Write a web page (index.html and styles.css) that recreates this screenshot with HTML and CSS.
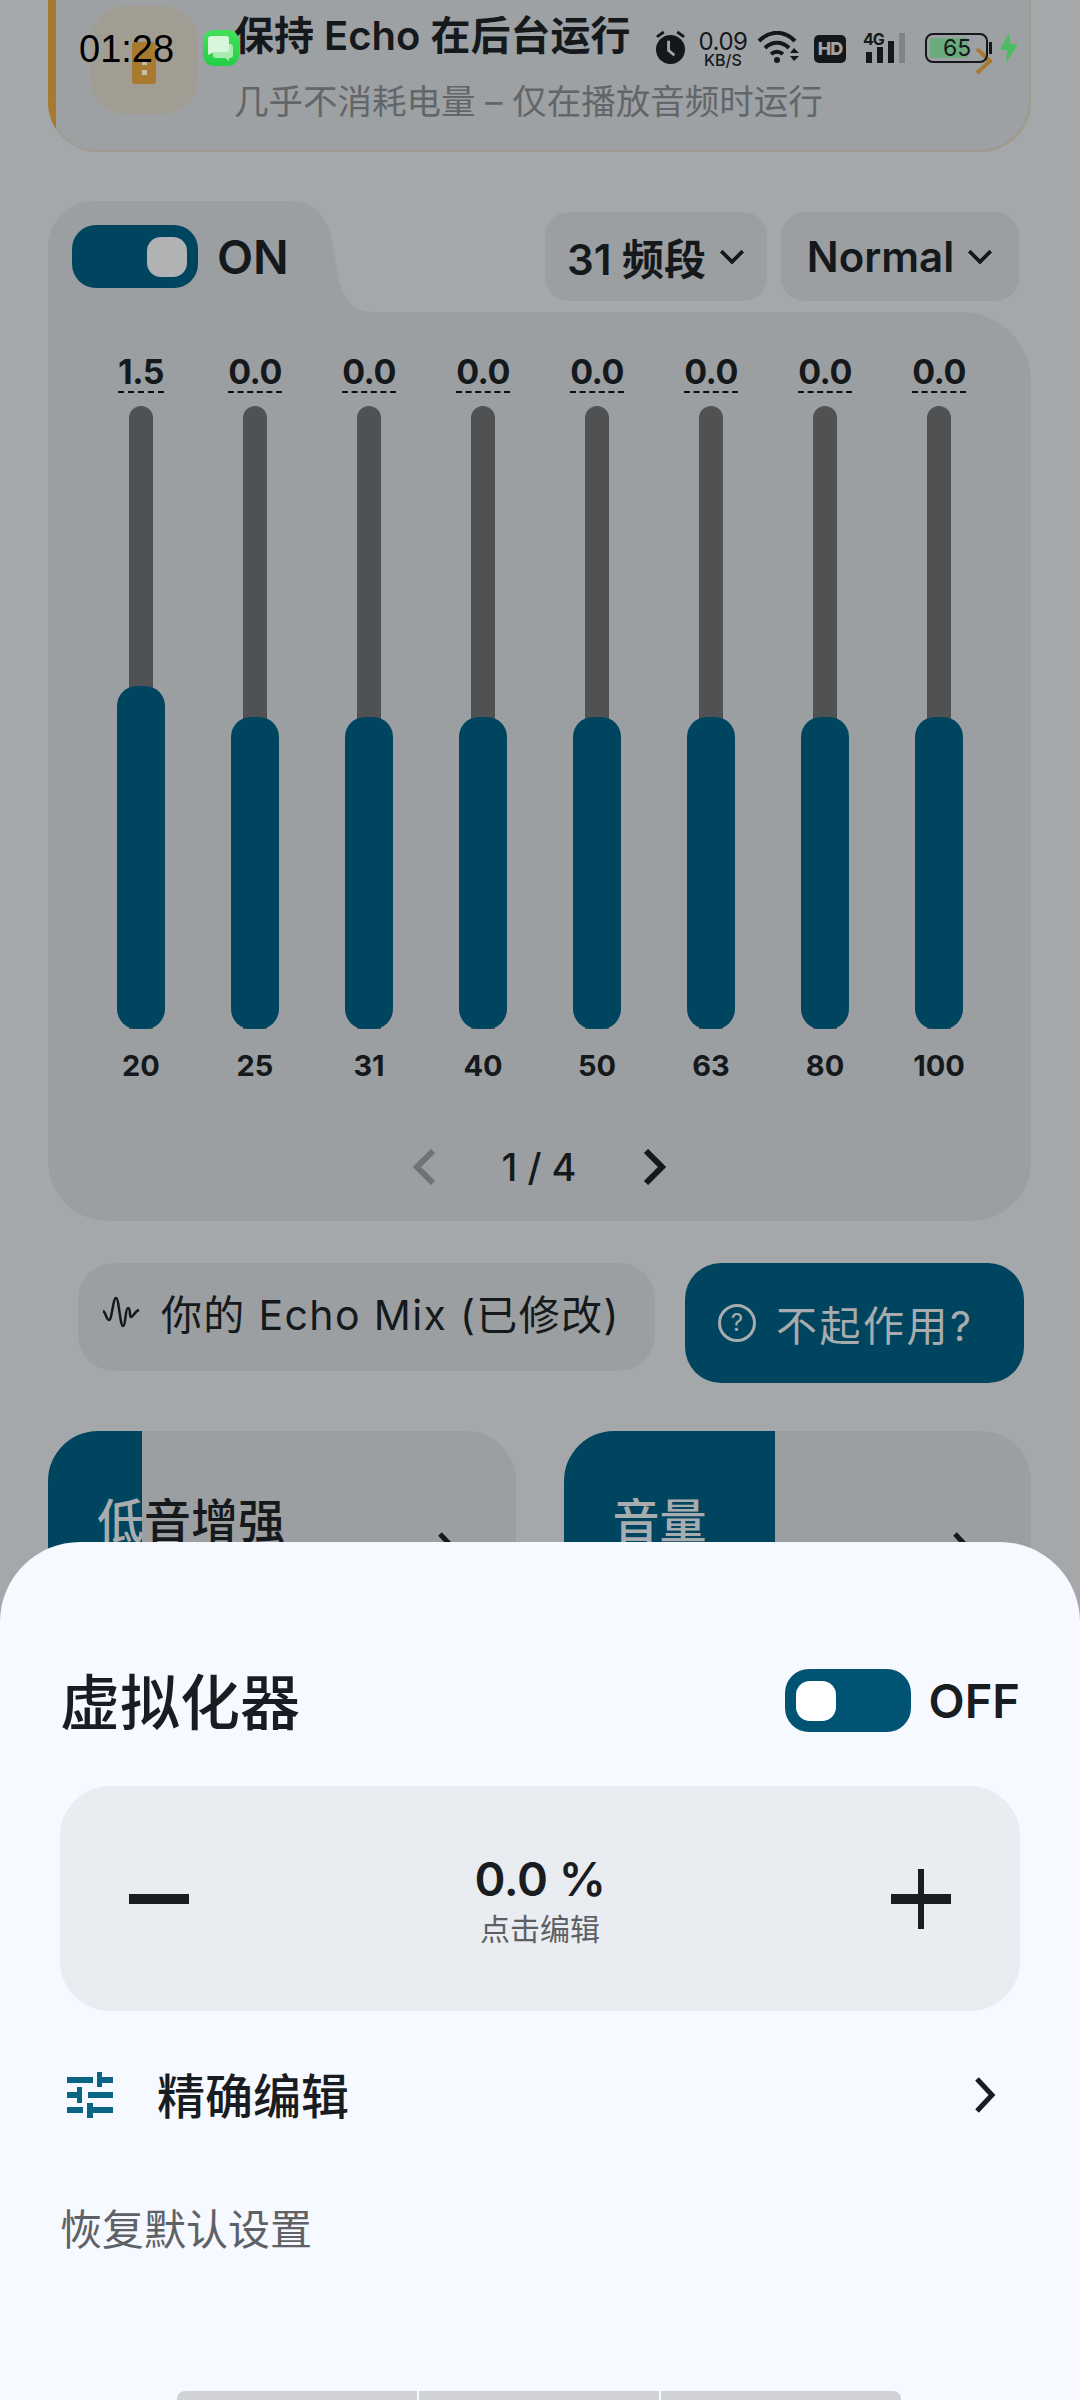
FILE: index.html
```html
<!DOCTYPE html>
<html lang="zh-CN">

<head>
    <meta charset="UTF-8" />
    <meta name="viewport" content="width=device-width,initial-scale=1.0" />
    <title>Echo</title>
    <link rel="stylesheet" href="styles.css">
</head>

<body>
    <div class="status">
        <span class="clock">01:28</span>
        <svg class="msg-icon" viewBox="0 0 36 36">
            <defs>
                <linearGradient id="msg-green" x1="0" y1="0" x2="0" y2="1">
                    <stop offset="0" stop-color="#45e05a" />
                    <stop offset="1" stop-color="#22cf45" />
                </linearGradient>
            </defs>
            <rect width="36" height="36" rx="11" fill="url(#msg-green)" />
            <path d="M10 14h17a3 3 0 0 1 3 3v8a3 3 0 0 1-3 3h-1v3l-4-3H13a3 3 0 0 1-3-3z" fill="#a9ecb2" />
            <path d="M8 6h15a3 3 0 0 1 3 3v10a3 3 0 0 1-3 3H11l-6 3V9a3 3 0 0 1 3-3z" fill="#d8f6da" />
        </svg>
        <div class="status-right">
            <svg class="alarm" viewBox="0 0 32 36">
                <circle cx="16" cy="20" r="15" fill="#15181b" />
                <path d="M2 7l7-5M30 7l-7-5" stroke="#15181b" stroke-width="3" fill="none" />
                <path d="M14 11v10l6 5" stroke="#a0a4a7" stroke-width="3" fill="none" />
            </svg>
            <div class="speed"><span class="speed-num">0.09</span><span class="speed-unit">KB/S</span></div>
            <svg class="wifi" viewBox="0 0 44 32">
                <path d="M2 10c11-11 25-11 36 0M8 17c7-7 17-7 24 0M14 23c4-3 8-3 12 0" stroke="#15181b" stroke-width="4" fill="none" />
                <circle cx="20" cy="29" r="3" fill="#15181b" />
                <path d="M33 22l4-5 5 5zM33 25l4 5 5-5z" fill="#15181b" />
            </svg>
            <span class="hd">HD</span>
            <div class="signal">
                <span class="signal-4g">4G</span>
                <div class="signal-bars">
                    <span class="bar bar-a"></span>
                    <span class="bar bar-b"></span>
                    <span class="bar bar-c"></span>
                    <span class="bar bar-d"></span>
                </div>
            </div>
            <div class="battery"><div class="battery-fill"></div><span class="battery-num">65</span></div>
            <span class="battery-nub"></span>
            <svg class="bolt" viewBox="0 0 18 30">
                <path d="M9 0L0 17h7l-1 13L18 11h-8z" fill="#4cbd63" />
            </svg>
        </div>
    </div>

    <div class="page">
        <div class="keep-card">
            <div class="keep-icon">
                <svg viewBox="0 0 24 42" class="keep-lock">
                    <rect width="24" height="42" rx="3" fill="#a87a30" />
                    <rect x="10" y="18" width="5" height="5" fill="#c8bfa9" />
                    <rect x="10" y="28" width="5" height="5" fill="#c8bfa9" />
                </svg>
            </div>
            <div class="keep-text">
                <div class="keep-title">保持 Echo 在后台运行</div>
                <div class="keep-sub">几乎不消耗电量 – 仅在播放音频时运行</div>
            </div>
            <svg class="keep-arrow" viewBox="0 0 18 28">
                <path d="M2 2l13 12L2 26" stroke="#a87a30" stroke-width="4" fill="none" />
            </svg>
        </div>

        <div class="eq">
            <div class="eq-head">
                <div class="eq-tab">
                    <div class="toggle toggle-on"><span class="thumb"></span></div>
                    <span class="toggle-label">ON</span>
                </div>
                <svg class="eq-curve" viewBox="0 0 83 111">
                    <path d="M0 0C26 0 39 16 44 50C49 84 53 111 83 111H0z" fill="#9b9fa2" />
                </svg>
                <div class="eq-selects">
                    <div class="select select-band">31 频段
                        <svg class="select-caret" viewBox="0 0 24 14"><path d="M2 2l10 10L22 2" /></svg>
                    </div>
                    <div class="select select-mode">Normal
                        <svg class="select-caret" viewBox="0 0 24 14"><path d="M2 2l10 10L22 2" /></svg>
                    </div>
                </div>
            </div>

            <div class="eq-body">
                <div class="bands">
                    <div class="band">
                        <span class="band-val">1.5</span>
                        <div class="band-track"><div class="band-fill band-fill-up"></div></div>
                        <span class="band-hz">20</span>
                    </div>
                    <div class="band">
                        <span class="band-val">0.0</span>
                        <div class="band-track"><div class="band-fill"></div></div>
                        <span class="band-hz">25</span>
                    </div>
                    <div class="band">
                        <span class="band-val">0.0</span>
                        <div class="band-track"><div class="band-fill"></div></div>
                        <span class="band-hz">31</span>
                    </div>
                    <div class="band">
                        <span class="band-val">0.0</span>
                        <div class="band-track"><div class="band-fill"></div></div>
                        <span class="band-hz">40</span>
                    </div>
                    <div class="band">
                        <span class="band-val">0.0</span>
                        <div class="band-track"><div class="band-fill"></div></div>
                        <span class="band-hz">50</span>
                    </div>
                    <div class="band">
                        <span class="band-val">0.0</span>
                        <div class="band-track"><div class="band-fill"></div></div>
                        <span class="band-hz">63</span>
                    </div>
                    <div class="band">
                        <span class="band-val">0.0</span>
                        <div class="band-track"><div class="band-fill"></div></div>
                        <span class="band-hz">80</span>
                    </div>
                    <div class="band">
                        <span class="band-val">0.0</span>
                        <div class="band-track"><div class="band-fill"></div></div>
                        <span class="band-hz">100</span>
                    </div>
                </div>
                <div class="pager">
                    <svg class="pager-arrow pager-prev" viewBox="0 0 24 36"><path d="M21 2L5 18l16 16" /></svg>
                    <span class="pager-num">1 / 4</span>
                    <svg class="pager-arrow" viewBox="0 0 24 36"><path d="M3 2l16 16L3 34" /></svg>
                </div>
            </div>
        </div>

        <div class="actions">
            <div class="mix-btn">
                <svg class="mix-wave" viewBox="0 0 40 32">
                    <path d="M1 15c3 1 3 9 6 9s4-22 7-22 4 28 7 28 2-18 5-18 1 9 3 9 4-6 8-7" />
                </svg>
                <span>你的 Echo Mix (已修改)</span>
            </div>
            <div class="help-btn">
                <span class="help-icon">?</span>
                <span class="help-text">不起作用?</span>
            </div>
        </div>

        <div class="tiles">
            <div class="tile">
                <div class="tile-fill tile-fill-bass"></div>
                <span class="tile-name"><span class="tile-on">低</span>音增强</span>
                <svg class="tile-arrow" viewBox="0 0 22 36"><path d="M3 2l15 16L3 34" /></svg>
            </div>
            <div class="tile">
                <div class="tile-fill tile-fill-vol"></div>
                <span class="tile-name tile-on">音量</span>
                <svg class="tile-arrow" viewBox="0 0 22 36"><path d="M3 2l15 16L3 34" /></svg>
            </div>
        </div>
    </div>

    <div class="sheet">
        <div class="sheet-head">
            <span class="sheet-title">虚拟化器</span>
            <div class="sheet-switch">
                <div class="toggle toggle-off"><span class="thumb"></span></div>
                <span class="toggle-label">OFF</span>
            </div>
        </div>
        <div class="stepper">
            <div class="step-minus"></div>
            <div class="step-value">
                <span class="step-num">0.0 %</span>
                <span class="step-hint">点击编辑</span>
            </div>
            <div class="step-plus"></div>
        </div>
        <div class="fine-row">
            <svg class="fine-icon" viewBox="0 0 46 46">
                <path d="M0 5h26v6H0zM30 0h5v5h11v6H35v4h-5zM10 15h5v16h-5v-5H0v-6h10zM21 20h25v6H21zM0 35h16v6H0zM20 31h6v4h20v6H26v5h-6z" fill="#0a6585" />
            </svg>
            <span class="fine-text">精确编辑</span>
            <svg class="fine-arrow" viewBox="0 0 22 36"><path d="M3 2l15 16L3 34" /></svg>
        </div>
        <div class="reset">恢复默认设置</div>
        <div class="sheet-bar">
            <span class="sheet-bar-part"></span>
            <span class="sheet-bar-part"></span>
            <span class="sheet-bar-part"></span>
        </div>
    </div>
</body>

</html>
```

FILE: styles.css
```css
* {
    box-sizing: border-box;
}

body {
    margin: 0;
    width: 1080px;
    height: 2400px;
    overflow: hidden;
    position: relative;
    background: #a4a8ab;
    color: #15191c;
    font-family: Inter, "Noto Sans CJK SC", sans-serif;
}

/* status bar lies over the page */
.status {
    position: absolute;
    top: 0;
    left: 0;
    right: 0;
    height: 80px;
    z-index: 5;
}

.clock {
    position: absolute;
    left: 79px;
    top: 28px;
    font-family: "Liberation Sans", sans-serif;
    font-size: 38px;
    line-height: 42px;
    color: #000;
}

.msg-icon {
    position: absolute;
    left: 203px;
    top: 30px;
    width: 36px;
    height: 36px;
}

.status-right {
    position: absolute;
    left: 655px;
    top: 30px;
    display: flex;
    align-items: flex-start;
}

.alarm {
    width: 31px;
    height: 35px;
    margin-right: 11px;
}

.speed {
    display: flex;
    flex-direction: column;
    align-items: center;
    width: 52px;
    margin-right: 8px;
    line-height: 1;
}

.speed-num {
    font-size: 24px;
    height: 22px;
    letter-spacing: -0.5px;
}

.speed-unit {
    font-size: 16px;
    font-weight: 500;
}

.wifi {
    width: 44px;
    height: 32px;
    margin: 1px 13px 0 0;
}

.hd {
    width: 32px;
    height: 28px;
    margin: 5px 17px 0 0;
    background: #15181b;
    border-radius: 5px;
    color: #a0a4a7;
    font-size: 18px;
    font-weight: 800;
    line-height: 28px;
    text-align: center;
    letter-spacing: -1px;
}

.signal {
    position: relative;
    width: 45px;
    height: 34px;
    margin-right: 17px;
}

.signal-4g {
    position: absolute;
    left: 0;
    top: 1px;
    font-size: 16px;
    font-weight: 700;
    line-height: 16px;
    letter-spacing: -1px;
}

.signal-bars {
    position: absolute;
    left: 3px;
    bottom: 1px;
    display: flex;
    align-items: flex-end;
    gap: 5px;
}

.bar {
    width: 6px;
    background: #15181b;
}

.bar-a {
    height: 11px;
}

.bar-b {
    height: 16px;
}

.bar-c {
    height: 22px;
}

.bar-d {
    height: 30px;
    background: #808488;
}

.battery {
    position: relative;
    width: 63px;
    height: 30px;
    margin-top: 3px;
    border: 2px solid #15181b;
    border-radius: 8px;
    padding: 3px;
}

.battery-fill {
    width: 38px;
    height: 100%;
    background: #6cab7c;
    border-radius: 3px;
}

.battery-num {
    position: absolute;
    left: 16px;
    top: 0;
    font-size: 23px;
    line-height: 26px;
}

.battery-nub {
    width: 3px;
    height: 12px;
    margin: 12px 8px 0 1px;
    background: #15181b;
}

.bolt {
    width: 18px;
    height: 30px;
    margin-top: 3px;
}

.page {
    display: flex;
    flex-direction: column;
    padding: 0 49px 0 48px;
}

.keep-card {
    position: relative;
    display: flex;
    height: 152px;
    padding: 6px 0 0 42px;
    overflow: hidden;
    background: #9da1a3;
    box-shadow: inset 2px 0 #a09b8e, inset -2px -2px #a09b8e;
    border-radius: 0 0 50px 50px;
}

/* amber strip down the left edge, clipped by the card corner */
.keep-card::before {
    content: "";
    position: absolute;
    left: 0;
    top: 0;
    width: 8px;
    height: 136px;
    background: #a87a30;
}

.keep-icon {
    display: flex;
    justify-content: center;
    width: 108px;
    height: 108px;
    padding-top: 36px;
    background: #a29d93;
    border-radius: 36px;
}

.keep-lock {
    width: 24px;
    height: 42px;
}

.keep-text {
    padding: 5px 0 0 36px;
}

.keep-title {
    width: fit-content;
    font-size: 40px;
    font-weight: 600;
    line-height: 50px;
    color: #15191c;
}

.keep-sub {
    margin-top: 20px;
    font-size: 34.5px;
    line-height: 42px;
    color: #62666a;
}

.keep-arrow {
    width: 18px;
    height: 28px;
    margin: 41px 38px 0 auto;
}

.eq {
    margin-top: 49px;
}

.eq-head {
    display: flex;
    height: 111px;
}

.eq-tab {
    display: flex;
    align-items: flex-start;
    width: 242px;
    padding: 24px 0 0 24px;
    background: #9b9fa2;
    border-radius: 46px 0 0 0;
}

.eq-curve {
    display: block;
    width: 83px;
    height: 111px;
}

.toggle {
    display: flex;
    align-items: center;
    width: 126px;
    height: 63px;
    padding: 0 11px;
    border-radius: 24px;
}

.toggle-on {
    justify-content: flex-end;
    background: #00455f;
}

.toggle-off {
    background: #005373;
}

.thumb {
    width: 40px;
    height: 40px;
    border-radius: 14px;
    background: #b0b2b3;
}

.toggle-off .thumb {
    background: #fff;
}

.toggle-label {
    margin-left: 19px;
    font-size: 47px;
    font-weight: 600;
    line-height: 63px;
}

.eq-selects {
    display: flex;
    flex: 1;
    justify-content: flex-end;
    gap: 14px;
    padding: 11px 12px 0 0;
}

.select {
    display: flex;
    align-items: center;
    justify-content: center;
    gap: 13px;
    height: 89px;
    background: #9b9fa2;
    border-radius: 24px;
    font-size: 42px;
    font-weight: 600;
}

.select-band {
    width: 222px;
}

.select-mode {
    width: 238px;
}

.select-caret {
    width: 26px;
    height: 15px;
    fill: none;
    stroke: #15191c;
    stroke-width: 3.5;
}

.eq-body {
    height: 909px;
    padding-top: 40px;
    background: #9b9fa2;
    border-radius: 0 70px 60px 60px;
}

.bands {
    display: flex;
    padding: 0 35px 0 36px;
    justify-content: space-between;
}

.band {
    display: flex;
    flex-direction: column;
    align-items: center;
    width: 114px;
}

.band-val {
    font-size: 34px;
    font-weight: 700;
    line-height: 39px;
    letter-spacing: -0.5px;
    border-bottom: 2px dashed #0b0e11;
}

.band-track {
    position: relative;
    width: 24px;
    height: 623px;
    margin-top: 13px;
    background: #4f5153;
    border-radius: 12px 12px 0 0;
}

.band-fill {
    position: absolute;
    left: -12px;
    bottom: 0;
    width: 48px;
    height: 312px;
    background: #00455f;
    border-radius: 20px;
}

.band-fill-up {
    height: 343px;
}

.band-hz {
    margin-top: 20px;
    font-size: 29px;
    font-weight: 700;
    line-height: 34px;
}

.pager {
    display: flex;
    align-items: center;
    justify-content: center;
    margin-top: 66px;
    padding-right: 1px;
}

.pager-arrow {
    width: 24px;
    height: 36px;
    fill: none;
    stroke: #15191c;
    stroke-width: 6;
}

.pager-prev {
    stroke: #6f7376;
}

.pager-num {
    width: 207px;
    text-align: center;
    font-size: 38px;
    font-weight: 500;
    line-height: 36px;
}

.actions {
    display: flex;
    align-items: flex-start;
    gap: 30px;
    margin: 42px 7px 0 30px;
}

.mix-btn {
    display: flex;
    align-items: center;
    gap: 19px;
    flex: 1;
    height: 108px;
    padding: 0 0 10px 24px;
    background: #9b9fa2;
    border-radius: 36px;
    font-size: 41px;
    letter-spacing: 1.35px;
}

.mix-wave {
    width: 40px;
    height: 32px;
    fill: none;
    stroke: #15191c;
    stroke-width: 2.5;
}

.help-btn {
    display: flex;
    align-items: center;
    gap: 20px;
    width: 339px;
    height: 120px;
    padding-left: 33px;
    background: #00455f;
    border-radius: 36px;
    color: #a8acae;
}

.help-text {
    font-size: 41px;
    letter-spacing: 2.5px;
}

.help-icon {
    width: 38px;
    height: 38px;
    border: 3px solid #a8acae;
    border-radius: 50%;
    font-size: 24px;
    line-height: 32px;
    text-align: center;
}

.tiles {
    display: flex;
    gap: 48px;
    margin-top: 48px;
}

.tile {
    position: relative;
    display: flex;
    align-items: flex-start;
    justify-content: space-between;
    flex: 1;
    height: 200px;
    overflow: hidden;
    background: #9b9fa2;
    border-radius: 50px;
    padding: 60px 57px 0 49px;
}

.tile-fill {
    position: absolute;
    left: 0;
    top: 0;
    bottom: 0;
    background: #00455f;
}

.tile-fill-bass {
    width: 94px;
}

.tile-fill-vol {
    width: 211px;
}

.tile-name {
    position: relative;
    font-size: 47px;
    font-weight: 500;
    line-height: 60px;
}

.tile-on {
    color: #a8acae;
}

.tile-arrow {
    width: 22px;
    height: 36px;
    margin-top: 41px;
    fill: none;
    stroke: #15191c;
    stroke-width: 5;
}

/* bottom sheet lies over the page */
.sheet {
    position: absolute;
    left: 0;
    right: 0;
    top: 1542px;
    bottom: 0;
    padding: 127px 60px 0 60px;
    background: #f6f9ff;
    border-radius: 80px 80px 0 0;
    color: #191c20;
}

.sheet-head {
    display: flex;
    align-items: center;
    justify-content: space-between;
    height: 63px;
}

.sheet-title {
    padding-bottom: 4px;
    font-size: 60px;
    font-weight: 500;
}

.sheet-switch {
    display: flex;
    align-items: center;
}

.sheet-switch .toggle-label {
    margin-left: 18px;
}

.stepper {
    display: flex;
    align-items: center;
    justify-content: space-between;
    height: 225px;
    margin-top: 54px;
    padding: 0 69px;
    background: #e9ecf1;
    border-radius: 50px;
}

.step-minus {
    width: 60px;
    height: 10px;
    background: #191c20;
}

.step-plus {
    position: relative;
    width: 60px;
    height: 10px;
    background: #191c20;
}

.step-plus::after {
    content: "";
    position: absolute;
    left: 27px;
    top: -25px;
    width: 6px;
    height: 60px;
    background: #191c20;
}

.step-value {
    display: flex;
    flex-direction: column;
    align-items: center;
    padding-top: 4px;
}

.step-num {
    font-size: 47px;
    font-weight: 600;
    line-height: 50px;
    letter-spacing: -0.5px;
}

.step-hint {
    margin-top: 6px;
    font-size: 30px;
    line-height: 38px;
    color: #5c6064;
}

.fine-row {
    display: flex;
    align-items: center;
    height: 46px;
    margin-top: 61px;
    padding: 0 24px 0 7px;
}

.fine-icon {
    width: 46px;
    height: 46px;
}

.fine-text {
    margin-left: 44px;
    padding-top: 3px;
    flex: 1;
    font-size: 48px;
    font-weight: 500;
    line-height: 44px;
}

.fine-arrow {
    width: 22px;
    height: 36px;
    fill: none;
    stroke: #191c20;
    stroke-width: 5;
}

.reset {
    margin-top: 87px;
    font-size: 42px;
    line-height: 50px;
    color: #5e6267;
}

.sheet-bar {
    position: absolute;
    left: 177px;
    bottom: 0;
    display: flex;
    gap: 2px;
    width: 724px;
    height: 9px;
    overflow: hidden;
    border-radius: 8px 8px 0 0;
}

.sheet-bar-part {
    flex: 1;
    background: #d1d2d6;
}
```
